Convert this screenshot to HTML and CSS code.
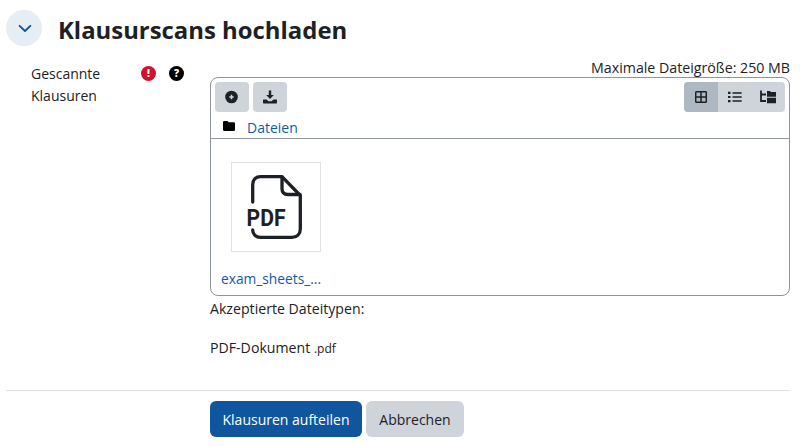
FILE: index.html
```html
<!DOCTYPE html>
<html lang="de">
<head>
<meta charset="utf-8">
<title>Klausurscans hochladen</title>
<link rel="stylesheet" href="styles.css">
</head>
<body>
<div class="page">
  <header class="head">
    <span class="toggle">
      <svg width="18" height="18" viewBox="0 0 18 18"><path d="M4.600 6.800 10 12 15.400 6.800" fill="none" stroke="#0f4f9c" stroke-width="1.800" stroke-linecap="round" stroke-linejoin="round"/></svg>
    </span>
    <h2 class="title">Klausurscans hochladen</h2>
  </header>
  <div class="row">
    <div class="label">
      <span class="label-text">Gescannte Klausuren</span>
      <span class="badges">
        <span class="dot red">!</span>
        <span class="dot black">?</span>
      </span>
    </div>
    <div class="field">
      <div class="max">Maximale Dateigröße: 250 MB</div>
      <div class="picker">
        <div class="toolbar">
          <div class="tools">
            <span class="btn">
              <svg width="14" height="14" viewBox="0 0 14 14"><circle cx="6.500" cy="7" r="6.300" fill="#1d2125"/><path d="M6.500 4.800v4.400M4.300 7h4.400" stroke="#ced4da" stroke-width="1.500"/></svg>
            </span>
            <span class="btn">
              <svg width="16" height="16" viewBox="0 0 16 16"><path d="M6.800 1.500h2.400v4.500h2.600L8 10 4.200 6h2.600z" fill="#1d2125"/><path d="M1.500 10.500h3L6.500 12.300h3l2-1.800h3c.4 0 .5.300.5.600v2.600c0 .5-.3.800-.8.800H1.800c-.5 0-.8-.3-.8-.8v-2.600c0-.3.100-.6.500-.6z" fill="#1d2125"/></svg>
            </span>
          </div>
          <div class="views">
            <span class="view on">
              <svg width="12" height="12" viewBox="0 0 12 12"><path d="M1.500.8h9a.8.8 0 0 1 .8.800v8.800a.8.8 0 0 1-.8.800h-9a.8.8 0 0 1-.8-.8V1.600a.8.8 0 0 1 .8-.8zM6 .8v10.400M.7 6h10.600" fill="none" stroke="#1d2125" stroke-width="1.500"/></svg>
            </span>
            <span class="view">
              <svg width="14" height="12" viewBox="0 0 14 12"><path d="M0 .8h2.500v2.200H0zM0 4.900h2.500v2.200H0zM0 9h2.500v2.200H0z" fill="#1d2125"/><path d="M4.500 1.900h9.200M4.500 6h9.200M4.500 10.100h9.200" stroke="#1d2125" stroke-width="1.500"/></svg>
            </span>
            <span class="view">
              <svg width="16" height="14" viewBox="0 0 16 14"><path d="M1 .5v10.500h5M1 4.500h5" fill="none" stroke="#1d2125" stroke-width="1.800"/><path d="M7 1h3l1 1h5v4.800H7zM7 7.800h9v5.400H7z" fill="#1d2125"/></svg>
            </span>
          </div>
        </div>
        <div class="crumbs">
          <svg class="folder" width="12" height="10" viewBox="0 0 12 10"><path d="M1.100 0h3.300l1.300 1.300h5.200c.6 0 1.100.5 1.100 1.100v6.400c0 .7-.5 1.200-1.100 1.200H1.100C.5 10 0 9.500 0 8.800V1.200C0 .5.500 0 1.100 0z" fill="#000"/></svg>
          <a class="link">Dateien</a>
        </div>
        <div class="files">
          <div class="file">
            <div class="thumb">
              <svg class="pdf-icon" width="56" height="66" viewBox="0 0 56 66">
                <path d="M4.700 28V11C4.700 6 7.500 2.700 12.500 2.700H34L52.300 21.500V55C52.300 60 49 63.300 44 63.300H12.500C7.500 63.300 4.700 60 4.700 56" fill="none" stroke="#1d2125" stroke-width="3.300" stroke-linecap="round" stroke-linejoin="round"/>
                <path d="M34 3V14.500C34 18.500 36.500 20.500 40 20.500H52" fill="none" stroke="#1d2125" stroke-width="3.300" stroke-linecap="round"/>
                <text x="-1.500" y="52" class="pdf" textLength="39" lengthAdjust="spacingAndGlyphs">PDF</text>
              </svg>
            </div>
            <a class="link name">exam_sheets_...</a>
          </div>
        </div>
      </div>
      <p class="accepted">Akzeptierte Dateitypen:</p>
      <p class="type">PDF-Dokument <small>.pdf</small></p>
    </div>
  </div>
  <div class="actions">
    <span class="submit">Klausuren aufteilen</span>
    <span class="cancel">Abbrechen</span>
  </div>
</div>
</body>
</html>
```
FILE: styles.css
```css
* { box-sizing: border-box; }
html, body { margin: 0; padding: 0; background: #fff; }
body { font-family: "Open Sans", "Noto Sans", sans-serif; font-size: 14px; line-height: 22px; color: #1d2125; overflow: hidden; }
.page { width: 800px; height: 446px; padding: 12px 10px 0 6px; }
.head { display: flex; align-items: center; gap: 16px; height: 36px; }
.toggle { width: 36px; height: 36px; border-radius: 50%; background: #e6edf5; display: flex; align-items: center; justify-content: center; margin-bottom: 4px; }
.title { margin: 0; font-size: 23.9px; line-height: 36px; font-weight: 700; }
.row { display: flex; margin-top: 8px; }
.label { width: 204px; padding-left: 25px; display: flex; align-items: flex-start; padding-top: 7px; }
.label-text { width: 85px; line-height: 22px; }
.badges { display: flex; gap: 13px; padding-left: 25px; padding-top: 3px; }
.dot { width: 15px; height: 15px; border-radius: 50%; color: #fff; font-size: 10px; line-height: 15px; font-weight: 800; text-align: center; }
.red { background: #d0112b; }
.black { background: #000; }
.field { width: 580px; }
.max { text-align: right; line-height: 22px; height: 22px; margin-top: 1px; font-size: 14.200px; }
.picker { height: 219px; border: 1px solid #8f959e; border-radius: 8px; margin-top: -2px; }
.toolbar { display: flex; justify-content: space-between; padding: 4px 4px 0 4px; }
.tools { display: flex; gap: 4px; }
.btn { width: 34px; height: 30px; background: #ced4da; border-radius: 4px; display: flex; align-items: center; justify-content: center; }
.views { display: flex; border-radius: 4px; overflow: hidden; background: #ced4da; }
.view { width: 33.670px; height: 30px; display: flex; align-items: center; justify-content: center; }
.view.on { background: #adb8c2; }
.crumbs { display: flex; align-items: center; padding-left: 12px; padding-top: 6px; gap: 12px; border-bottom: 1px solid #8f959e; height: 27px; }
.folder { margin-top: -4px; }
.link { color: #0f5aa8; }
.files { padding: 23px 0 0 10px; }
.file { width: 101px; }
.thumb { width: 90px; height: 90px; margin-left: 10px; border: 1px solid #dee2e6; display: flex; align-items: center; justify-content: center; }
.pdf-icon { overflow: visible; }
.name { display: block; margin-top: 16px; white-space: nowrap; font-size: 13.750px; }
.pdf { font-family: Roboto, sans-serif; font-size: 23px; font-weight: 700; fill: #1d2125; }
.accepted { margin: 2px 0 0; font-size: 14.150px; }
.type { margin: 17px 0 0; font-size: 14.150px; }
.type small { font-size: 12px; }
.actions { margin-top: 30px; border-top: 1px solid #dee2e6; padding: 10px 0 0 204px; display: flex; gap: 4px; }
.submit, .cancel { height: 36px; border-radius: 6px; line-height: 37px; text-align: center; }
.submit { width: 152px; background: #0f569f; color: #fff; }
.cancel { width: 98px; background: #ced4da; }
```
